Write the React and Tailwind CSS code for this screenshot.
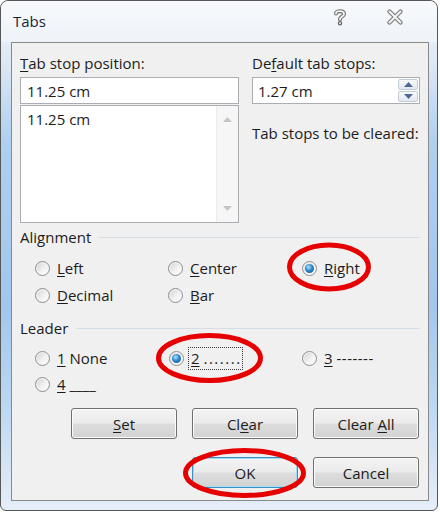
import React from 'react';

const txt = 'text-[15px] leading-[20px] text-[#1c1c1c]';

const Radio = ({ checked }) => (
  <span className="inline-flex w-[15px] h-[15px] shrink-0 items-center justify-center rounded-full border border-[#8c8e8f] bg-[linear-gradient(135deg,#cfd0d1_0%,#f2f2f2_55%,#ffffff_100%)] shadow-[inset_0_0_0_1px_#f6f6f6]">
    {checked && (
      <span className="block w-[9px] h-[9px] rounded-full bg-[radial-gradient(circle_at_40%_35%,#b6e4ff_0%,#2b88cc_45%,#0d4c85_100%)]" />
    )}
  </span>
);

const Option = ({ checked, children }) => (
  <div className="flex items-center h-[20px]">
    <Radio checked={checked} />
    <span className={`${txt} ml-[7px] whitespace-pre`}>{children}</span>
  </div>
);

const GroupHeader = ({ children }) => (
  <div className="flex items-center h-[20px] pr-[8px]">
    <span className={txt}>{children}</span>
    <div className="flex-1 ml-[8px] h-px bg-[#d5dde4]" />
  </div>
);

const Button = ({ children, isDefault }) => (
  <div
    className={`flex items-center justify-center w-[106px] h-[31px] rounded-[3px] border ${
      isDefault
        ? 'border-[#3c8fc4] shadow-[inset_0_0_0_1px_#9fdcf6]'
        : 'border-[#707070] shadow-[inset_0_0_0_1px_#fbfbfb]'
    } bg-[linear-gradient(#f3f3f3_0%,#ebebeb_48%,#dddddd_52%,#d2d2d2_100%)] ${txt}`}
  >
    <span className="whitespace-pre">{children}</span>
  </div>
);

const Arrow = ({ up, color = '#c6c6c6' }) => (
  <svg width="9" height="5" viewBox="0 0 9 5">
    <path d={up ? 'M0 5 L4.5 0 L9 5 Z' : 'M0 0 L4.5 5 L9 0 Z'} fill={color} />
  </svg>
);

export default function App() {
  return (
    <div className="relative w-[440px] h-[512px] bg-white font-['Open_Sans','Noto_Sans',sans-serif] overflow-hidden">
      <div className="w-[438px] h-[511px] rounded-t-[8px] rounded-b-[6px] border border-[#575757] bg-[linear-gradient(#f2f6fb_0%,#dce8f5_12%,#aecff0_28%,#a2c7ed_60%,#bcd8f2_80%,#e6eef8_100%)] flex flex-col">
        {/* title bar */}
        <div className="h-[41px] flex items-center pl-[12px] bg-[linear-gradient(#f7f9fc,#eef3f9)] rounded-t-[8px]">
          <span className="text-[15px] text-[#1a2638]">Tabs</span>
          <div className="ml-auto flex items-center gap-[40px] mr-[34px] -mt-[10px]">
            <svg width="14" height="18" viewBox="0 0 14 18">
              <g fill="none" strokeLinecap="round" strokeLinejoin="round">
                <path d="M3 5.5 C3 2.5 11 2 11 6 C11 8.5 7 8.5 7 11.5" stroke="#6f6f6f" strokeWidth="4" />
                <path d="M3 5.5 C3 2.5 11 2 11 6 C11 8.5 7 8.5 7 11.5" stroke="#f4f4f4" strokeWidth="1.8" />
                <circle cx="7" cy="15.2" r="1.6" stroke="#6f6f6f" strokeWidth="1.4" fill="#f4f4f4" />
              </g>
            </svg>
            <svg width="16" height="16" viewBox="0 0 16 16">
              <g strokeLinecap="round">
                <path d="M2.5 2.5 L13.5 13.5 M13.5 2.5 L2.5 13.5" stroke="#7a7a7a" strokeWidth="4.2" />
                <path d="M2.5 2.5 L13.5 13.5 M13.5 2.5 L2.5 13.5" stroke="#f5f5f5" strokeWidth="2" />
              </g>
            </svg>
          </div>
        </div>

        {/* client area */}
        <div className="ml-[10px] mr-[8px] mb-[9px] flex-1 border border-[#8a8a8a] bg-[#f0f0f0] pl-[8px] pt-[10px]">
          <div className="flex">
            <div className="w-[219px]">
              <div className={`h-[20px] ${txt}`}>
                <u className="underline-offset-2">T</u>ab stop position:
              </div>
              <div className={`mt-[4px] h-[27px] border border-[#abadb3] bg-white pl-[6px] flex items-center ${txt}`}>
                11.25 cm
              </div>
              <div className="mt-px h-[118px] border border-[#abadb3] bg-white flex">
                <div className={`flex-1 pl-[6px] pt-[3px] ${txt}`}>11.25 cm</div>
                <div className="w-[22px] bg-[#f6f6f6] border-l border-[#ececec] flex flex-col items-center justify-between py-[11px]">
                  <Arrow up />
                  <Arrow />
                </div>
              </div>
            </div>
            <div className="ml-[13px] w-[168px]">
              <div className={`h-[20px] ${txt}`}>
                De<u className="underline-offset-2">f</u>ault tab stops:
              </div>
              <div className="mt-[4px] h-[27px] border border-[#abadb3] bg-white flex">
                <div className={`flex-1 pl-[5px] flex items-center ${txt}`}>1.27 cm</div>
                <div className="w-[22px] flex flex-col p-px gap-px">
                  <div className="flex-1 flex items-center justify-center rounded-[2px] border border-[#c3cbd6] bg-[linear-gradient(#f8f9fb,#e3e8ef)]">
                    <Arrow up color="#4e6a94" />
                  </div>
                  <div className="flex-1 flex items-center justify-center rounded-[2px] border border-[#c3cbd6] bg-[linear-gradient(#f8f9fb,#e3e8ef)]">
                    <Arrow color="#4e6a94" />
                  </div>
                </div>
              </div>
              <div className={`mt-[19px] h-[20px] ${txt}`}>Tab stops to be cleared:</div>
            </div>
          </div>

          {/* Alignment */}
          <div className="mt-[4px]">
            <GroupHeader>Alignment</GroupHeader>
          </div>
          <div className="ml-[15px] mt-[11px] grid grid-cols-[133px_134px_auto] gap-y-[7px]">
            <Option><u className="underline-offset-2">L</u>eft</Option>
            <Option><u className="underline-offset-2">C</u>enter</Option>
            <Option checked><u className="underline-offset-2">R</u>ight</Option>
            <Option><u className="underline-offset-2">D</u>ecimal</Option>
            <Option><u className="underline-offset-2">B</u>ar</Option>
          </div>

          {/* Leader */}
          <div className="mt-[13px]">
            <GroupHeader>Leader</GroupHeader>
          </div>
          <div className="ml-[15px] mt-[10px] grid grid-cols-[134px_133px_auto] gap-y-[6px]">
            <Option><u className="underline-offset-2">1</u> None</Option>
            <div className="flex items-center h-[20px]">
              <Radio checked />
              <div className={`${txt} ml-[4px] h-[23px] pl-[2px] flex items-center border border-dotted border-[#3a3a3a]`}>
                <span className="whitespace-pre">
                  <u className="underline-offset-2">2</u> <span className="tracking-[1.5px]">.......</span>
                </span>
              </div>
            </div>
            <Option><u className="underline-offset-2">3</u> <span className="tracking-[0.5px]">-------</span></Option>
            <Option><u className="underline-offset-2">4</u> ____</Option>
          </div>

          {/* Buttons */}
          <div className="ml-[51px] mt-[14px] flex gap-[15px]">
            <Button><u className="underline-offset-2">S</u>et</Button>
            <Button>Cl<u className="underline-offset-2">e</u>ar</Button>
            <Button>Clear <u className="underline-offset-2">A</u>ll</Button>
          </div>
          <div className="ml-[51px] mt-[18px] flex gap-[15px]">
            <div className="w-[106px]" />
            <Button isDefault>OK</Button>
            <Button>Cancel</Button>
          </div>
        </div>
      </div>

      {/* red annotation ellipses */}
      <svg className="absolute inset-0 pointer-events-none" width="440" height="512">
        <g fill="none" stroke="#e60000" strokeWidth="5">
          <ellipse cx="329" cy="267" rx="39.5" ry="22" />
          <ellipse cx="209.5" cy="358" rx="51" ry="22.5" />
          <ellipse cx="244.5" cy="473" rx="59" ry="22.5" />
        </g>
      </svg>
    </div>
  );
}
